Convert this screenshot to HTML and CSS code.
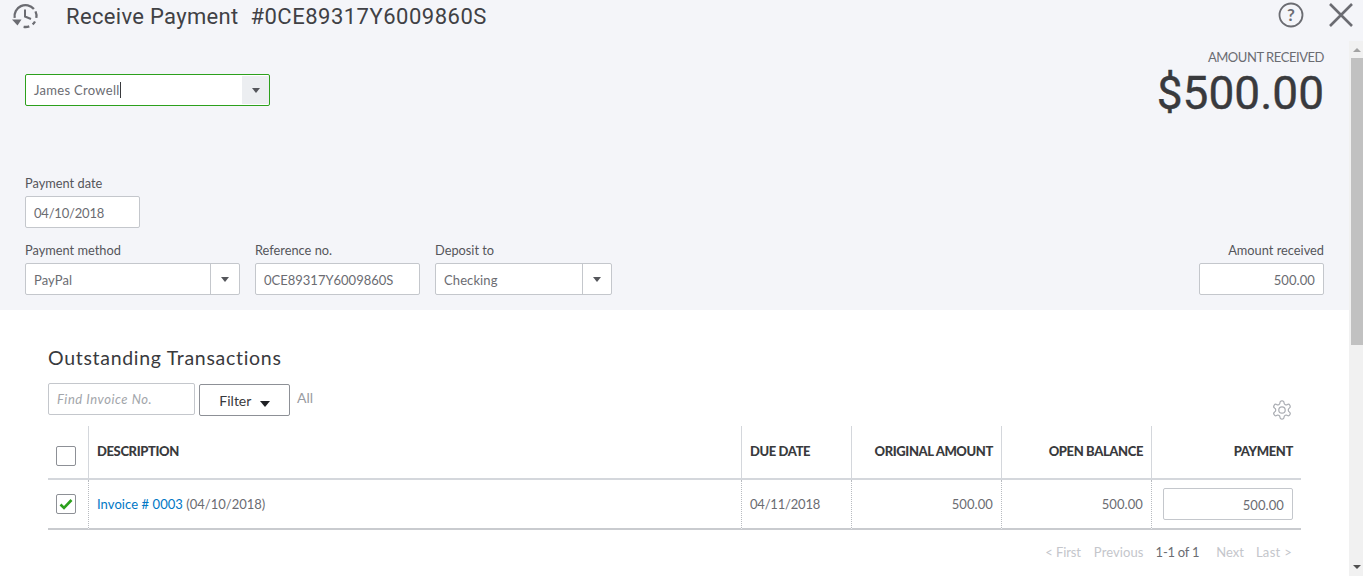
FILE: index.html
```html
<!DOCTYPE html>
<html lang="en">
<head>
<meta charset="utf-8">
<title>Receive Payment</title>
<link rel="stylesheet" href="styles.css">
</head>
<body>
<div class="page">
  <section class="panel">
    <header class="head">
      <svg class="history" width="30" height="30" viewBox="0 0 30 30" fill="none" stroke="#6b6c72" stroke-width="2.3">
        <path d="M3.7 15.9A11 11 0 0 1 22.9 6.9"/>
        <path d="M24.5 9.4A11 11 0 0 1 25.3 15.9"/>
        <path d="M24 19.5A11 11 0 0 1 21.6 22.4"/>
        <path d="M18.3 24.3A11 11 0 0 1 12.6 24.8"/>
        <path d="M14 7.5V14.5L20 17" stroke-width="2"/>
        <path d="M1 17.5H10.5L6.5 23.5Z" fill="#6b6c72" stroke="none"/>
      </svg>
      <h1 class="title">Receive Payment <span class="ref">#0CE89317Y6009860S</span></h1>
      <svg class="help" width="26" height="26" viewBox="0 0 26 26" fill="none">
        <circle cx="13" cy="13" r="11.5" stroke="#6b6c72" stroke-width="1.8"/>
        <text x="13" y="19" text-anchor="middle" class="help-mark">?</text>
      </svg>
      <svg class="close" width="26" height="26" viewBox="0 0 26 26" fill="none" stroke="#6b6c72" stroke-width="2.6">
        <path d="M2 2L24 24M24 2L2 24"/>
      </svg>
    </header>
    <div class="top">
      <div class="select customer">
        <span class="value">James Crowell<i class="caret"></i></span>
        <span class="toggle shaded"><i class="tri"></i></span>
      </div>
      <div class="amount">
        <div class="amount-label">AMOUNT RECEIVED</div>
        <div class="amount-value">$500.00</div>
      </div>
    </div>
    <div class="field date">
      <label class="label">Payment date</label>
      <div class="input digits">04/10/2018</div>
    </div>
    <div class="fields">
      <div class="field method">
        <label class="label">Payment method</label>
        <div class="select"><span class="value">PayPal</span><span class="toggle"><i class="tri"></i></span></div>
      </div>
      <div class="field refno">
        <label class="label">Reference no.</label>
        <div class="input refcode">0CE89317Y6009860S</div>
      </div>
      <div class="field deposit">
        <label class="label">Deposit to</label>
        <div class="select"><span class="value">Checking</span><span class="toggle"><i class="tri"></i></span></div>
      </div>
      <div class="field received">
        <label class="label right">Amount received</label>
        <div class="input right money">500.00</div>
      </div>
    </div>
  </section>

  <section class="lower">
    <h2 class="section-title">Outstanding Transactions</h2>
    <div class="toolbar">
      <div class="find">Find Invoice No.</div>
      <button class="filter" type="button">Filter <i class="tri dark"></i></button>
      <span class="all">All</span>
      <svg class="gear" width="22" height="22" viewBox="0 0 24 24" fill="none" stroke="#a9acb2" stroke-width="1.3">
        <path d="M12.22 2h-.44a2 2 0 0 0-2 2v.18a2 2 0 0 1-1 1.73l-.43.25a2 2 0 0 1-2 0l-.15-.08a2 2 0 0 0-2.73.73l-.22.38a2 2 0 0 0 .73 2.73l.15.1a2 2 0 0 1 1 1.72v.51a2 2 0 0 1-1 1.74l-.15.09a2 2 0 0 0-.73 2.73l.22.38a2 2 0 0 0 2.73.73l.15-.08a2 2 0 0 1 2 0l.43.25a2 2 0 0 1 1 1.73V20a2 2 0 0 0 2 2h.44a2 2 0 0 0 2-2v-.18a2 2 0 0 1 1-1.73l.43-.25a2 2 0 0 1 2 0l.15.08a2 2 0 0 0 2.73-.73l.22-.39a2 2 0 0 0-.73-2.73l-.15-.08a2 2 0 0 1-1-1.74v-.5a2 2 0 0 1 1-1.74l.15-.09a2 2 0 0 0 .73-2.73l-.22-.38a2 2 0 0 0-2.73-.73l-.15.08a2 2 0 0 1-2 0l-.43-.25a2 2 0 0 1-1-1.73V4a2 2 0 0 0-2-2z"/>
        <circle cx="12" cy="12" r="3.5"/>
      </svg>
    </div>
    <div class="table">
      <div class="th check-cell"><span class="check"></span></div>
      <div class="th">DESCRIPTION</div>
      <div class="th">DUE DATE</div>
      <div class="th num">ORIGINAL AMOUNT</div>
      <div class="th num">OPEN BALANCE</div>
      <div class="th num">PAYMENT</div>
      <div class="td check-cell">
        <span class="check">
          <svg width="14" height="12" viewBox="0 0 14 12" fill="none" stroke="#2ca01c" stroke-width="2.6"><path d="M1.5 6.5L5 10L12.5 2"/></svg>
        </span>
      </div>
      <div class="td"><a class="link">Invoice # 0003</a>&nbsp;(04/10/2018)</div>
      <div class="td digits">04/11/2018</div>
      <div class="td num money">500.00</div>
      <div class="td num money">500.00</div>
      <div class="td num pay"><div class="input right money">500.00</div></div>
    </div>
    <nav class="pager">
      <span class="p-first">&lt; First</span>
      <span class="p-prev">Previous</span>
      <span class="p-count">1-1 of 1</span>
      <span class="p-next">Next</span>
      <span class="p-last">Last &gt;</span>
    </nav>
  </section>

  <div class="scrollbar">
    <i class="arrow up"></i>
    <i class="thumb"></i>
    <i class="arrow down"></i>
  </div>
</div>
</body>
</html>
```
FILE: styles.css
```css
* { box-sizing: border-box; }
html, body { margin: 0; height: 100%; overflow: hidden; }
body { font-family: "Lato", "Open Sans", sans-serif; font-size: 13px; color: #6b6c72; background: #fff; }
.page { position: relative; height: 576px; overflow: hidden; }

.panel { background: #f4f5f9; height: 310px; padding: 0 39px 0 25px; }
.head { display: flex; align-items: center; height: 34px; margin-right: -39px; margin-left: -25px; padding: 0 9px 0 11px; }
.history { margin-top: -1px; }
.title { margin: -2px 0 0 25px; font-family: "Roboto", "Inter", sans-serif; font-weight: 400; font-size: 22px; letter-spacing: 0.33px; color: #404145; white-space: pre; }
.ref { margin-left: 6px; letter-spacing: 0.5px; }
.help { margin-left: auto; margin-top: -4px; }
.help-mark { font-family: "Lato", sans-serif; font-weight: 700; font-size: 17px; fill: #6b6c72; }
.close { margin-left: 24px; margin-top: -4px; }

.top { display: flex; justify-content: space-between; height: 142px; }
.customer { width: 245px; height: 32px; margin-top: 40px; border: 1px solid #2ca01c; }
.customer .toggle { width: 27px; border-left: 0; margin: 1px 0 1px auto; }
.shaded { background: #eceef1; }
.caret { display: inline-block; width: 1px; height: 16px; background: #393a3d; vertical-align: -3px; }
.amount { text-align: right; padding-top: 15px; }
.amount-label { font-size: 13px; letter-spacing: -0.45px; line-height: 16px; color: #6b6c72; }
.amount-value { padding-top: 1px; font-family: "Roboto", "Inter", sans-serif; font-weight: 400; font-size: 46px; line-height: 54px; -webkit-text-stroke: 0.4px #393a3d; color: #393a3d; }

.field { display: flex; flex-direction: column; }
.label { height: 15px; margin-bottom: 5px; font-size: 12.8px; line-height: 14px; color: #55565b; }
.label.right { text-align: right; }
.input { height: 32px; padding: 1px 8px 0; display: flex; align-items: center; background: #fff; border: 1px solid #c4c7cc; border-radius: 2px; font-size: 13px; color: #6b6c72; white-space: nowrap; }
.input.right { justify-content: flex-end; }
.select { display: flex; align-items: stretch; height: 32px; background: #fff; border: 1px solid #c4c7cc; border-radius: 2px; }
.select.customer { border-color: #2ca01c; }
.value { flex: 1; display: flex; align-items: center; padding: 1px 0 0 8px; font-size: 13px; letter-spacing: 0.1px; color: #6b6c72; }
.customer .value { padding-top: 0; letter-spacing: 0.3px; }
.toggle { width: 29px; display: flex; align-items: center; justify-content: center; border-left: 1px solid #c4c7cc; }
.tri { display: inline-block; width: 0; height: 0; border-left: 4px solid transparent; border-right: 4px solid transparent; border-top: 5px solid #55565b; }
.digits { letter-spacing: -0.2px; }
.refcode { letter-spacing: 0; }
.money { letter-spacing: 0.1px; }

.date { width: 115px; }
.fields { display: flex; margin-top: 15px; }
.method { width: 215px; }
.refno { width: 165px; margin-left: 15px; }
.deposit { width: 177px; margin-left: 15px; }
.received { width: 125px; margin-left: auto; }

.lower { width: 1253px; margin-left: 48px; }
.section-title { margin: 0; padding-top: 36px; height: 73px; font-size: 19.5px; line-height: 24px; font-weight: 400; letter-spacing: 0.7px; color: #393a3d; }
.toolbar { display: flex; align-items: flex-start; height: 43px; }
.find { width: 147px; height: 32px; padding-left: 8px; display: flex; align-items: center; background: #fff; border: 1px solid #c4c7cc; border-radius: 2px; font-style: italic; font-size: 13px; letter-spacing: 0.55px; color: #a2a5aa; }
.filter { width: 91px; height: 32px; margin: 1px 0 0 4px; padding: 0; background: #fff; border: 1px solid #8d9096; border-radius: 2px; font-family: inherit; font-size: 14px; color: #393a3d; }
.tri.dark { margin-left: 5px; border-left-width: 5px; border-right-width: 5px; border-top: 6px solid #1f2024; vertical-align: -1px; }
.all { margin: 7px 0 0 7px; font-size: 14px; line-height: 16px; color: #9a9ca2; }
.gear { margin: 16px 8px 0 auto; }

.table { display: grid; grid-template-columns: 40px 653px 110px 150px 150px 150px; grid-template-rows: 54px 50px; }
.th { display: flex; align-items: center; padding: 0 8px 2px; font-size: 13px; font-weight: 900; letter-spacing: -0.38px; color: #393a3d; border-left: 1px solid #d4d7dc; border-bottom: 2px solid #d4d7dc; }
.td { display: flex; align-items: center; padding: 0 8px; font-size: 13px; color: #6b6c72; border-left: 1px dotted #b8bbc0; border-bottom: 2px solid #c9cbcf; }
.check-cell { border-left: 0; padding: 0 0 0 8px; }
.th.check-cell { padding-top: 8px; }
.num { justify-content: flex-end; }
.check { width: 20px; height: 20px; display: flex; align-items: center; justify-content: center; background: #fff; border: 1px solid #8d9096; border-radius: 2px; }
.link { color: #0077c5; letter-spacing: 0.07px; }
.pay { padding: 0 8px 0 11px; }
.pay .input { width: 100%; height: 32px; }

.pager { display: flex; justify-content: flex-end; align-items: center; height: 44px; padding-right: 9px; font-size: 13px; color: #c4c6cb; }
.p-first { letter-spacing: -0.1px; }
.p-prev { margin-left: 13px; letter-spacing: 0.1px; }
.p-count { margin-left: 12px; letter-spacing: -0.25px; color: #6b6c72; }
.p-next { margin-left: 17px; }
.p-last { margin-left: 12px; letter-spacing: 0.3px; }

.scrollbar { position: absolute; top: 41px; right: 0; bottom: 0; width: 14px; background: #f1f1f1; display: flex; flex-direction: column; align-items: flex-end; }
.thumb { width: 12px; height: 287px; margin-top: 6px; background: #c1c1c1; }
.arrow { display: block; width: 0; height: 0; border-left: 4px solid transparent; border-right: 4px solid transparent; }
.arrow.up { margin: 7px 2px 0 0; border-bottom: 4px solid #a3a3a3; }
.arrow.down { margin: auto 2px 7px 0; border-top: 4px solid #505050; }
```
